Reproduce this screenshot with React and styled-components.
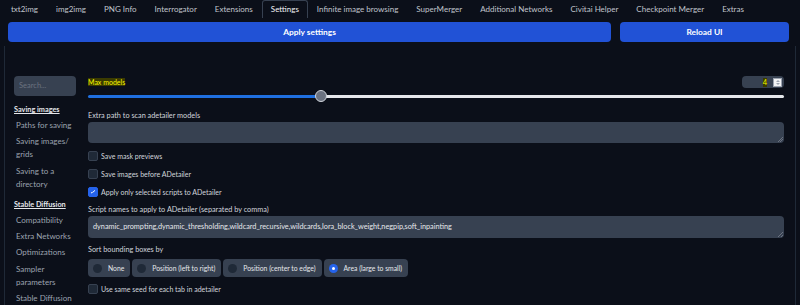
import React from "react";
import styled, { createGlobalStyle } from "styled-components";

const GlobalStyle = createGlobalStyle`
  html, body {
    margin: 0;
    background: #0b0f19;
    font-family: "Lato", "Liberation Sans", sans-serif;
    color: #d1d5db;
    overflow: hidden;
  }
`;

const TabBar = styled.div`
  display: flex;
  height: 18px;
  padding-left: 2px;
`;

const Tab = styled.div`
  padding: 0 8px;
  font-size: 8px;
  line-height: 17px;
  color: ${(p) => (p.$active ? "#f3f4f6" : "#c0c4cc")};
  border: 1px solid ${(p) => (p.$active ? "#374151" : "transparent")};
  border-bottom: none;
  border-radius: 3px 3px 0 0;
  white-space: nowrap;
`;

const ButtonRow = styled.div`
  display: flex;
  gap: 9px;
  padding: 4px 11px 0 8px;
`;

const Button = styled.button`
  flex: ${(p) => (p.$grow ? 1 : "0 0 169px")};
  height: 20px;
  border: none;
  border-radius: 4px;
  background: #2152d6;
  color: #ffffff;
  font-family: inherit;
  font-weight: 700;
  font-size: 8.4px;
`;

const Panel = styled.div`
  display: flex;
  gap: 12px;
  margin: 4px 4px 0;
  padding: 30px 11px 0 9px;
  border-left: 1px solid #1f2937;
  border-right: 1px solid #1f2937;
  height: calc(100vh - 46px);
  box-sizing: border-box;
  overflow: hidden;
`;

const Sidebar = styled.div`
  width: 62px;
  flex: 0 0 62px;
  display: flex;
  flex-direction: column;
`;

const Search = styled.div`
  height: 20px;
  border-radius: 4px;
  background: #374151;
  color: #6b7280;
  font-size: 7.5px;
  line-height: 20px;
  padding-left: 5px;
  margin-bottom: 8px;
`;

const Section = styled.div`
  font-size: 7.3px;
  font-weight: 700;
  color: #e5e7eb;
  text-decoration: underline;
  line-height: 12px;
  margin: ${(p) => (p.$first ? "0" : "5px")} 0 3px;
`;

const Item = styled.div`
  font-size: 8px;
  color: #9ca3af;
  line-height: 13px;
  padding-left: 2px;
  margin-bottom: 3.3px;
`;

const Main = styled.div`
  flex: 1;
  display: flex;
  flex-direction: column;
`;

const Label = styled.div`
  font-size: 7.3px;
  line-height: 10px;
  color: #d1d5db;
  margin-bottom: 1px;
`;

const Mark = styled.span`
  background: #3b3b00;
  color: #f5f500;
`;

const TopRow = styled.div`
  display: flex;
  justify-content: space-between;
  align-items: center;
  height: 12px;
  font-size: 7px;
`;

const NumberBox = styled.div`
  width: 42px;
  height: 12px;
  border-radius: 4px;
  background: #374151;
  display: flex;
  align-items: center;
  justify-content: flex-end;
  padding-right: 2px;
  box-sizing: border-box;
  gap: 6px;
  font-size: 7.5px;
`;

const Spinner = styled.div`
  width: 9px;
  height: 9px;
  background: #f3f4f6;
  border: 1px solid #9ca3af;
  box-sizing: border-box;
  position: relative;
  &::before,
  &::after {
    content: "";
    position: absolute;
    left: 2px;
    border-left: 2px solid transparent;
    border-right: 2px solid transparent;
  }
  &::before {
    top: 1px;
    border-bottom: 2px solid #9ca3af;
  }
  &::after {
    bottom: 1px;
    border-top: 2px solid #9ca3af;
  }
`;

const Slider = styled.div`
  position: relative;
  height: 12px;
  margin: 2px 0 9px;
  display: flex;
  align-items: center;
`;

const Track = styled.div`
  flex: 1;
  height: 3px;
  border-radius: 2px;
  background: linear-gradient(
    to right,
    #1f6fe0 0,
    #1f6fe0 ${(p) => p.$pct}%,
    #e5e7eb ${(p) => p.$pct}%
  );
`;

const Thumb = styled.div`
  position: absolute;
  top: 0;
  width: 12px;
  height: 12px;
  margin-left: -6px;
  border-radius: 50%;
  background: #6b7280;
  border: 1px solid #d1d5db;
  box-sizing: border-box;
`;

const TextArea = styled.div`
  position: relative;
  height: ${(p) => p.$h}px;
  border-radius: 4px;
  background: #374151;
  font-size: 7.3px;
  color: #e5e7eb;
  line-height: ${(p) => p.$h}px;
  padding-left: 5px;
  margin-bottom: ${(p) => p.$mb}px;
  &::after {
    content: "";
    position: absolute;
    right: 1px;
    bottom: 1px;
    width: 5px;
    height: 5px;
    background: linear-gradient(
      135deg,
      transparent 45%,
      #6b7280 45%,
      #6b7280 55%,
      transparent 55%,
      transparent 70%,
      #6b7280 70%,
      #6b7280 80%,
      transparent 80%
    );
  }
`;

const CheckRow = styled.div`
  display: flex;
  align-items: center;
  gap: 3px;
  height: 10px;
  margin-bottom: 8px;
  font-size: 7px;
  color: #d1d5db;
`;

const Box = styled.div`
  width: 10px;
  height: 10px;
  border-radius: 2px;
  background: ${(p) => (p.$checked ? "#2563eb" : "#1f2937")};
  border: 1px solid ${(p) => (p.$checked ? "#2563eb" : "#374151")};
  box-sizing: border-box;
  display: flex;
  align-items: center;
  justify-content: center;
`;

const RadioGroup = styled.div`
  display: flex;
  gap: 2px;
  margin: 3px 0 7px;
`;

const RadioItem = styled.div`
  display: flex;
  align-items: center;
  gap: 6px;
  height: 18px;
  padding: 0 6px 0 5px;
  border-radius: 4px;
  background: #374151;
  font-size: 6.8px;
  color: #e5e7eb;
`;

const Dot = styled.div`
  width: 9px;
  height: 9px;
  border-radius: 50%;
  background: ${(p) => (p.$on ? "#2563eb" : "#1f2937")};
  display: flex;
  align-items: center;
  justify-content: center;
  &::after {
    content: "";
    width: 3px;
    height: 3px;
    border-radius: 50%;
    background: ${(p) => (p.$on ? "#ffffff" : "transparent")};
  }
`;

const tabs = [
  "txt2img",
  "img2img",
  "PNG Info",
  "Interrogator",
  "Extensions",
  "Settings",
  "Infinite image browsing",
  "SuperMerger",
  "Additional Networks",
  "Civitai Helper",
  "Checkpoint Merger",
  "Extras",
];

const radios = [
  "None",
  "Position (left to right)",
  "Position (center to edge)",
  "Area (large to small)",
];

function Check({ checked, children }) {
  return (
    <CheckRow>
      <Box $checked={checked}>
        {checked && (
          <svg width="6" height="6" viewBox="0 0 6 6">
            <path d="M1 4.2 L2.2 3.2 M2.4 3.6 L5 1.4" stroke="#fff" strokeWidth="1" fill="none" />
          </svg>
        )}
      </Box>
      {children}
    </CheckRow>
  );
}

export default function App() {
  const pct = 33.5;
  return (
    <>
      <GlobalStyle />
      <TabBar>
        {tabs.map((t) => (
          <Tab key={t} $active={t === "Settings"}>
            {t}
          </Tab>
        ))}
      </TabBar>
      <ButtonRow>
        <Button $grow>Apply settings</Button>
        <Button>Reload UI</Button>
      </ButtonRow>
      <Panel>
        <Sidebar>
          <Search>Search...</Search>
          <Section $first>Saving images</Section>
          <Item>Paths for saving</Item>
          <Item>Saving images/ grids</Item>
          <Item>Saving to a directory</Item>
          <Section>Stable Diffusion</Section>
          <Item>Compatibility</Item>
          <Item>Extra Networks</Item>
          <Item>Optimizations</Item>
          <Item>Sampler parameters</Item>
          <Item>Stable Diffusion</Item>
        </Sidebar>
        <Main>
          <TopRow>
            <Mark>Max models</Mark>
            <NumberBox>
              <Mark>4</Mark>
              <Spinner />
            </NumberBox>
          </TopRow>
          <Slider>
            <Track $pct={pct} />
            <Thumb style={{ left: `${pct}%` }} />
          </Slider>
          <Label>Extra path to scan adetailer models</Label>
          <TextArea $h={21} $mb={8} />
          <Check>Save mask previews</Check>
          <Check>Save images before ADetailer</Check>
          <Check checked>Apply only selected scripts to ADetailer</Check>
          <Label>Script names to apply to ADetailer (separated by comma)</Label>
          <TextArea $h={22} $mb={7}>
            dynamic_prompting,dynamic_thresholding,wildcard_recursive,wildcards,lora_block_weight,negpip,soft_inpainting
          </TextArea>
          <Label>Sort bounding boxes by</Label>
          <RadioGroup>
            {radios.map((r, i) => (
              <RadioItem key={r}>
                <Dot $on={i === 3} />
                {r}
              </RadioItem>
            ))}
          </RadioGroup>
          <Check>Use same seed for each tab in adetailer</Check>
        </Main>
      </Panel>
    </>
  );
}
